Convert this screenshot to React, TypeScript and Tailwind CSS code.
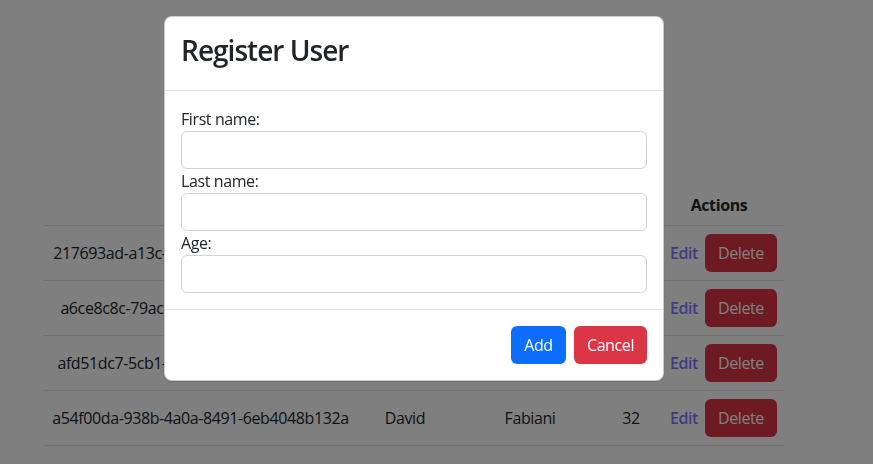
import React from "react";

const users = [
  { id: "217693ad-a13c-4b8e-9d2a-5c0f71e3b94d", first: "Anna", last: "Rossi", age: 28 },
  { id: "a6ce8c8c-79ac-4f66-b8e7-2f3a9d0c0e7f", first: "Luca", last: "Bianchi", age: 41 },
  { id: "afd51dc7-5cb1-4e2f-8a67-3b9c0d4f7e2b", first: "Marta", last: "Conti", age: 35 },
  { id: "a54f00da-938b-4a0a-8491-6eb4048b132a", first: "David", last: "Fabiani", age: 32 },
];

const font = { fontFamily: '"Open Sans", "Noto Sans", sans-serif' };

function Field({ label }: { label: string }) {
  return (
    <div>
      <label className="block text-base leading-6 text-[#212529]">{label}</label>
      <input
        type="text"
        className="block w-full h-[38px] rounded-[6px] border border-[#ced4da] bg-white px-3 outline-none"
      />
    </div>
  );
}

export default function App() {
  return (
    <div className="min-h-[464px] bg-white text-[#212529] tracking-[-0.025em]" style={font}>
      <div className="pt-[185px] pl-[43px]">
        <table className="w-[741px] table-fixed border-collapse text-base text-center">
          <thead>
            <tr className="border-b border-[#dee2e6] h-[40px]">
              <th className="w-[315px] font-bold">Id</th>
              <th className="w-[94px] font-bold">First name</th>
              <th className="w-[156px] font-bold">Last name</th>
              <th className="w-[46px] font-bold">Age</th>
              <th className="w-[130px] font-bold">Actions</th>
            </tr>
          </thead>
          <tbody>
            {users.map((u) => (
              <tr key={u.id} className="border-b border-[#e5e5e5] h-[55px]">
                <td className="whitespace-nowrap">{u.id}</td>
                <td>{u.first}</td>
                <td>{u.last}</td>
                <td>{u.age}</td>
                <td>
                  <div className="flex items-center justify-end gap-[7px] pr-[7px]">
                    <span className="font-semibold text-[#7b7bff]">Edit</span>
                    <button className="h-[38px] w-[72px] rounded-[6px] bg-[#dc3545] text-white">
                      Delete
                    </button>
                  </div>
                </td>
              </tr>
            ))}
          </tbody>
        </table>
      </div>

      <div className="fixed inset-0 bg-black/50" />

      <div className="fixed left-[164px] top-[16px] w-[500px] rounded-[8px] border border-black/20 bg-white shadow-sm">
        <div className="border-b border-[#dee2e6] px-4 pt-4 pb-[15px]">
          <h2 className="text-[28px] leading-[34px] font-semibold tracking-[-0.035em] mb-2 text-[#212529]">
            Register User
          </h2>
        </div>
        <div className="flex flex-col p-4">
          <Field label="First name:" />
          <Field label="Last name:" />
          <Field label="Age:" />
        </div>
        <div className="flex justify-end gap-2 border-t border-[#dee2e6] px-4 py-4">
          <button className="h-[38px] w-[55px] rounded-[6px] bg-[#0d6efd] text-white">Add</button>
          <button className="h-[38px] w-[73px] rounded-[6px] bg-[#dc3545] text-white">Cancel</button>
        </div>
      </div>
    </div>
  );
}
